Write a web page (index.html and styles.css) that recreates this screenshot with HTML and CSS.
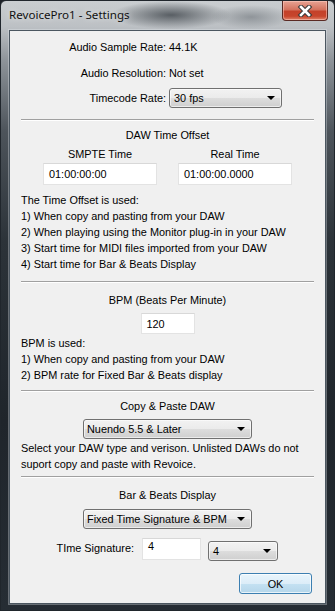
FILE: index.html
```html
<!DOCTYPE html>
<html lang="en">
<head>
    <meta charset="UTF-8">
    <meta name="viewport" content="width=device-width, initial-scale=1.0">
    <title>RevoicePro1 - Settings</title>
    <link rel="stylesheet" href="styles.css">
</head>
<body>
    <div class="window">
        <div class="titlebar">
            <span class="title">RevoicePro1 - Settings</span>
            <button class="close" type="button" aria-label="Close">
                <svg width="18" height="12" viewBox="0 0 18 12">
                    <path d="M5 2 L13 10 M13 2 L5 10" stroke="#3a3a3a" stroke-width="4.6" stroke-linecap="square"/>
                    <path d="M5 2 L13 10 M13 2 L5 10" stroke="#ffffff" stroke-width="2.6" stroke-linecap="square"/>
                </svg>
            </button>
        </div>

        <div class="client">
            <!-- audio info -->
            <div class="field-row first">
                <span class="field-label">Audio Sample Rate:</span>
                <span>44.1K</span>
            </div>
            <div class="field-row second">
                <span class="field-label">Audio Resolution:</span>
                <span>Not set</span>
            </div>
            <div class="field-row third">
                <span class="field-label">Timecode Rate:</span>
                <div class="select select-rate"><span>30 fps</span><i class="arrow"></i></div>
            </div>

            <div class="separator sep-1"></div>

            <!-- time offset -->
            <div class="heading head-offset">DAW Time Offset</div>
            <div class="time-cols">
                <div class="time-col">
                    <div class="heading">SMPTE Time</div>
                    <div class="textbox time-box">01:00:00:00</div>
                </div>
                <div class="time-col">
                    <div class="heading">Real Time</div>
                    <div class="textbox time-box">01:00:00.0000</div>
                </div>
            </div>
            <div class="notes notes-offset">
                <div>The Time Offset is used:</div>
                <div>1) When copy and pasting from your DAW</div>
                <div>2) When playing using the Monitor plug-in in your DAW</div>
                <div>3) Start time for MIDI files imported from your DAW</div>
                <div>4) Start time for Bar &amp; Beats Display</div>
            </div>

            <div class="separator sep-2"></div>

            <!-- bpm -->
            <div class="heading head-bpm">BPM (Beats Per Minute)</div>
            <div class="textbox bpm-box">120</div>
            <div class="notes notes-bpm">
                <div>BPM is used:</div>
                <div>1) When copy and pasting from your DAW</div>
                <div>2) BPM rate for Fixed Bar &amp; Beats display</div>
            </div>

            <div class="separator sep-3"></div>

            <!-- copy paste -->
            <div class="heading head-daw">Copy &amp; Paste DAW</div>
            <div class="select select-wide select-daw"><span>Nuendo 5.5 &amp; Later</span><i class="arrow"></i></div>
            <div class="notes notes-daw">
                <div>Select your DAW type and verison. Unlisted DAWs do not</div>
                <div>suport copy and paste with Revoice.</div>
            </div>

            <div class="separator sep-4"></div>

            <!-- bars -->
            <div class="heading head-bars">Bar &amp; Beats Display</div>
            <div class="select select-wide select-bars"><span>Fixed Time Signature &amp; BPM</span><i class="arrow"></i></div>
            <div class="sig-row">
                <span class="sig-label">TIme Signature:</span>
                <div class="textbox sig-box">4</div>
                <div class="select select-sig"><span>4</span><i class="arrow"></i></div>
            </div>

            <div class="buttons">
                <button class="ok" type="button">OK</button>
            </div>
        </div>
    </div>
</body>
</html>
```

FILE: styles.css
```css
body {
    margin: 0;
    width: 335px;
    height: 611px;
    overflow: hidden;
    background-color: #1c2127;
    font-family: "Liberation Sans", Arial, sans-serif;
    font-size: 10.9px;
    color: #000;
}
.window {
    box-sizing: border-box;
    height: 611px;
    padding: 0 8px 8px 8px;
    border: 1px solid #20262c;
    border-radius: 6px 6px 0 0;
    background:
        radial-gradient(ellipse 60px 14px at 170px 14px, rgba(70,76,82,0.85), rgba(70,76,82,0) 100%),
        radial-gradient(ellipse 40px 12px at 250px 16px, rgba(110,116,122,0.6), rgba(110,116,122,0) 100%),
        linear-gradient(to bottom, #c9cdd0 0, #bcc0c4 26px, #8d9399 60px, #4d545b 130px, #2c3339 240px, #1f252b 420px, #262d34 100%);
}
.titlebar {
    height: 29px;
    display: flex;
    justify-content: space-between;
    align-items: flex-start;
}
.title {
    font-family: "Noto Sans", sans-serif;
    font-size: 11.6px;
    margin-top: 6px;
    color: #111;
    text-shadow: 0 0 6px rgba(255,255,255,0.7);
}
.close {
    width: 46px;
    height: 20px;
    margin-right: -2px;
    padding: 0;
    border: 1px solid #5a2a24;
    border-top: none;
    border-radius: 0 0 4px 4px;
    background: linear-gradient(to bottom, #e7a394 0, #d4735f 45%, #c4412a 55%, #c7452c 80%, #e0826a 100%);
    box-shadow: inset 0 0 0 1px rgba(255,210,200,0.5);
    display: flex;
    justify-content: center;
    align-items: center;
}
.client {
    box-sizing: border-box;
    height: 574px;
    background-color: #f0f0f0;
    border: 1px solid #4b5660;
    box-shadow: 0 0 0 1px rgba(230,236,242,0.35);
    display: flex;
    flex-direction: column;
}
.field-row {
    display: flex;
    align-items: center;
    height: 16px;
}
.field-label {
    width: 156px;
    text-align: right;
    margin-right: 3px;
}
.first {
    margin-top: 8px;
}
.second {
    margin-top: 10px;
}
.third {
    margin-top: 7px;
    height: 20px;
}
.select {
    box-sizing: border-box;
    height: 20px;
    display: flex;
    align-items: center;
    justify-content: space-between;
    padding: 0 6px 0 4px;
    border: 1px solid #707070;
    border-radius: 3px;
    background: linear-gradient(to bottom, #f2f2f2 0, #ebebeb 50%, #dddddd 51%, #cfcfcf 100%);
    box-shadow: inset 0 0 0 1px rgba(255,255,255,0.6);
}
.arrow {
    width: 0;
    height: 0;
    border-left: 4px solid transparent;
    border-right: 4px solid transparent;
    border-top: 4px solid #000;
}
.select-rate {
    width: 113px;
}
.separator {
    height: 1px;
    margin-left: 11px;
    margin-right: 11px;
    background-color: #a0a0a0;
    border-bottom: 1px solid #ffffff;
}
.sep-1 {
    margin-top: 11px;
}
.heading {
    text-align: center;
    height: 16px;
    line-height: 16px;
}
.head-offset {
    margin-top: 6px;
}
.time-cols {
    display: flex;
    justify-content: center;
    gap: 21px;
    margin-top: 3px;
}
.time-col {
    display: flex;
    flex-direction: column;
}
.textbox {
    box-sizing: border-box;
    background-color: #fff;
    border: 1px solid #e3e3e3;
    border-top-color: #d8d8d8;
    display: flex;
    align-items: center;
    padding-left: 5px;
}
.time-box {
    width: 114px;
    height: 22px;
    margin-top: 1px;
}
.notes {
    padding-left: 11px;
    line-height: 16px;
}
.notes-offset {
    margin-top: 7px;
}
.sep-2 {
    margin-top: 9px;
}
.head-bpm {
    margin-top: 9px;
}
.bpm-box {
    width: 54px;
    height: 21px;
    margin: 5px auto 0 auto;
}
.notes-bpm {
    margin-top: 1px;
}
.sep-3 {
    margin-top: 7px;
}
.head-daw {
    margin-top: 6px;
}
.select-wide {
    width: 169px;
    margin: 5px auto 0 auto;
    padding-left: 3px;
}
.notes-daw {
    margin-top: 1px;
}
.sep-4 {
    margin-top: 4px;
}
.head-bars {
    margin-top: 9px;
}
.select-bars {
    margin-top: 6px;
}
.sig-row {
    display: flex;
    align-items: flex-start;
    margin-top: 9px;
    height: 23px;
}
.sig-label {
    width: 124px;
    text-align: right;
    margin-top: 4px;
    margin-right: 8px;
}
.sig-box {
    width: 59px;
    height: 22px;
    align-items: flex-start;
    padding-top: 1px;
}
.select-sig {
    width: 70px;
    margin-left: 7px;
    margin-top: 3px;
}
.buttons {
    display: flex;
    justify-content: flex-end;
    margin-top: 12px;
    padding-right: 13px;
}
.ok {
    width: 73px;
    height: 21px;
    padding: 0;
    font-family: inherit;
    font-size: inherit;
    color: #000;
    border: 1px solid #3c7fb1;
    border-radius: 3px;
    background: linear-gradient(to bottom, #e9f5fc 0, #dcedf8 50%, #c4e1f2 51%, #b5d6ea 100%);
    box-shadow: inset 0 0 0 1px rgba(255,255,255,0.7);
}
```
